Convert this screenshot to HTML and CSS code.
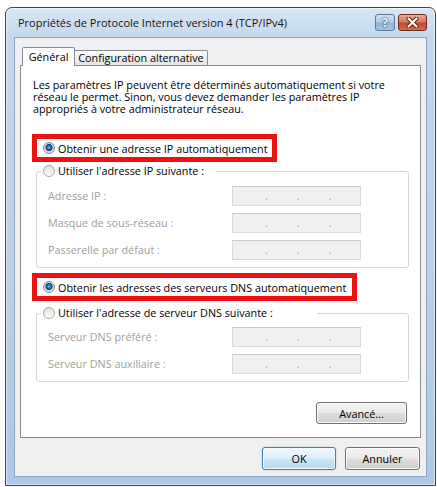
FILE: index.html
```html
<!DOCTYPE html>
<html lang="fr">
<head>
<meta charset="utf-8">
<title>Propriétés de Protocole Internet version 4 (TCP/IPv4)</title>
<link rel="stylesheet" href="styles.css">
</head>
<body>
<div class="window">
  <div class="titlebar">
    <span class="title">Propriétés de Protocole Internet version 4 (TCP/IPv4)</span>
    <div class="caption-btns">
      <span class="cbtn help">?</span>
      <span class="cbtn close">
        <svg width="13" height="11" viewBox="0 0 13 11">
          <path d="M2.5 1.5 L10.5 9.5 M10.5 1.5 L2.5 9.5" stroke="#5b1c12" stroke-width="4" stroke-linecap="round"/>
          <path d="M2.5 1.5 L10.5 9.5 M10.5 1.5 L2.5 9.5" stroke="#ffffff" stroke-width="2.2" stroke-linecap="round"/>
        </svg>
      </span>
    </div>
  </div>
  <div class="client">
    <div class="tabs">
      <div class="tab active">Général</div>
      <div class="tab inactive">Configuration alternative</div>
    </div>
    <div class="panel">
      <p class="intro"><span class="line">Les paramètres IP peuvent être déterminés automatiquement si votre</span><span class="line">réseau le permet. Sinon, vous devez demander les paramètres IP</span><span class="line">appropriés à votre administrateur réseau.</span></p>

      <div class="highlight hl-ip">
        <span class="radio checked"></span><span>Obtenir une adresse IP automatiquement</span>
      </div>

      <fieldset class="group g-ip">
        <legend class="legend l-ip"><span class="radio"></span><span>Utiliser l'adresse IP suivante :</span></legend>
        <div class="grid">
          <span class="lbl">Adresse IP :</span>
          <span class="ipfield"><i>.</i><i>.</i><i>.</i></span>
          <span class="lbl">Masque de sous-réseau :</span>
          <span class="ipfield"><i>.</i><i>.</i><i>.</i></span>
          <span class="lbl">Passerelle par défaut :</span>
          <span class="ipfield"><i>.</i><i>.</i><i>.</i></span>
        </div>
      </fieldset>

      <div class="highlight hl-dns">
        <span class="radio checked"></span><span>Obtenir les adresses des serveurs DNS automatiquement</span>
      </div>

      <fieldset class="group g-dns">
        <legend class="legend l-dns"><span class="radio"></span><span>Utiliser l'adresse de serveur DNS suivante :</span></legend>
        <div class="grid">
          <span class="lbl">Serveur DNS préféré :</span>
          <span class="ipfield"><i>.</i><i>.</i><i>.</i></span>
          <span class="lbl">Serveur DNS auxiliaire :</span>
          <span class="ipfield"><i>.</i><i>.</i><i>.</i></span>
        </div>
      </fieldset>

      <div class="adv-row"><button class="btn adv">Avancé...</button></div>
    </div>
    <div class="footer">
      <button class="btn ok">OK</button>
      <button class="btn cancel">Annuler</button>
    </div>
  </div>
</div>
</body>
</html>
```
FILE: styles.css
```css
* { box-sizing: border-box; }
html, body { margin: 0; padding: 0; background: #fff; }
body {
  width: 437px; height: 487px; overflow: hidden;
  font-family: "Open Sans", "Noto Sans", sans-serif;
  font-size: 10.8px; color: #000;
}

.window {
  margin: 7px 0 0 5px;
  width: 431px; height: 479px;
  border: 1px solid #33475d;
  border-radius: 7px 7px 0 0;
  background: linear-gradient(180deg, #d8e6f5 0px, #c4d8ee 29px, #b9d0ea 60%, #adc8e7 100%);
  box-shadow: inset 0 0 0 1px rgba(255,255,255,.55);
  display: flex; flex-direction: column;
  padding: 0 8px 8px 8px;
}

.titlebar {
  height: 29px;
  display: flex; justify-content: space-between; align-items: flex-start;
}
.title { padding-left: 4px; line-height: 29px; font-size: 11px; color: #151515; white-space: nowrap; }
.caption-btns { display: flex; gap: 3px; margin-top: 6px; }
.cbtn {
  height: 17px; border-radius: 3px;
  display: flex; align-items: center; justify-content: center;
}
.help {
  width: 20px;
  border: 1px solid #5f7896;
  background: linear-gradient(180deg, #d3e1f1 0%, #b4cbe6 48%, #93b2d8 52%, #a9c3e3 100%);
  color: #f4f8fc; font-weight: bold; font-size: 12px; line-height: 15px;
  text-shadow: 0 0 2px #2d4463, 0 0 1px #2d4463;
}
.close {
  width: 29px;
  border: 1px solid #6e2a1c;
  background: linear-gradient(180deg, #e9a899 0%, #d77a64 45%, #c44a2e 55%, #d66a45 100%);
}

.client {
  flex: 1;
  background: #f0f0f0;
  border: 1px solid #8fa6c2;
  display: flex; flex-direction: column;
}

.tabs { display: flex; align-items: flex-end; height: 18px; margin: 9px 0 0 7px; }
.tab { text-align: center; white-space: nowrap; }
.tab.active {
  width: 53px; height: 19px; margin-bottom: -1px;
  border: 1px solid #898c95; border-bottom: none;
  border-radius: 2px 2px 0 0;
  background: #fff; position: relative; z-index: 1;
  line-height: 17px;
}
.tab.inactive {
  width: 133px; height: 15px;
  border: 1px solid #898c95; border-left: none; border-bottom: none;
  border-radius: 0 2px 0 0;
  background: linear-gradient(180deg, #fafafa, #e4e4e4);
  line-height: 14px;
}

.panel {
  height: 373px;
  margin: 0 5px;
  border: 1px solid #898c95;
  background: #fff;
}

.intro { margin: 0; padding: 13px 0 0 12px; white-space: nowrap; }
.intro .line { display: block; height: 12px; line-height: 12px; }

.highlight {
  display: flex; align-items: center; gap: 3px;
  height: 28px; margin-left: 11px;
  border: 5px solid #ee1111; background: #fff;
  padding-left: 6px; white-space: nowrap;
}
.hl-ip { width: 245px; margin-top: 19px; }
.hl-dns { width: 325px; margin-top: 5px; }

.radio {
  flex: none; width: 12px; height: 12px; border-radius: 50%;
  border: 1px solid #a8a8a8;
  background: linear-gradient(180deg, #e2e2e2, #fbfbfb);
}
.radio.checked {
  border-color: #7d8a99;
  background: radial-gradient(circle at 50% 45%, #8cc2ee 0, #2b6fbf 1.6px, #123f85 3.2px, #d6d6d6 3.9px, #f3f3f3 100%);
}

fieldset.group {
  margin: 2px 11px 0 15px;
  padding: 8px 0 7px 0;
  border: 1px solid #d7d7d7; border-radius: 3px;
  min-width: 0;
}
fieldset.g-dns { margin-top: 5px; padding-top: 7px; }
.legend {
  display: flex; align-items: center; gap: 3px;
  height: 14px; line-height: 14px;
  padding: 0 0 0 2px; margin-left: 4px;
  white-space: nowrap;
}
.l-ip { width: 175px; }
.l-dns { width: 276px; }

.grid {
  display: grid;
  grid-template-columns: 184px 129px;
  row-gap: 7px;
  padding-left: 11px;
}
.lbl { color: #a0a0a0; line-height: 20px; white-space: nowrap; }
.ipfield {
  height: 20px;
  border: 1px solid #dadada; border-top-color: #c9c9c9;
  background: #f0f0f0;
  display: flex; padding-left: 32px; gap: 29px;
  line-height: 18px; color: #a5a5a5;
}
.ipfield i { font-style: normal; }

.adv-row { display: flex; justify-content: flex-end; margin: 20px 13px 0 0; }

.btn {
  font: inherit; color: #000; padding: 0;
  border: 1px solid #707070; border-radius: 3px;
  background: linear-gradient(180deg, #f2f2f2 0%, #ebebeb 49%, #dddddd 51%, #cfcfcf 100%);
  box-shadow: inset 0 0 0 1px #fbfbfb;
}
.adv { width: 91px; height: 22px; }

.footer { display: flex; justify-content: flex-end; gap: 9px; margin: 9px 6px 0 0; }
.footer .btn { height: 23px; }
.ok {
  width: 74px;
  border-color: #3c7fb1;
  background: linear-gradient(180deg, #eef7fd 0%, #dff0fb 49%, #c7e6f8 51%, #b7ddf4 100%);
  box-shadow: inset 0 0 0 1px #f4fbff, 0 0 2px #9fd0f0;
}
.cancel { width: 75px; }
```
